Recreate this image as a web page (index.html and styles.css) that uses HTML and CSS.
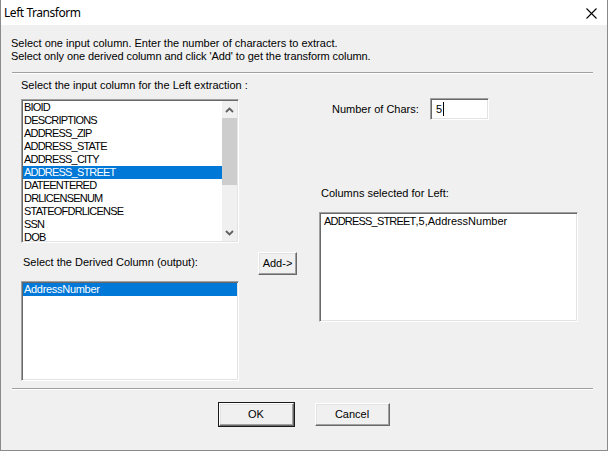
FILE: index.html
```html
<!DOCTYPE html>
<html>
<head>
<meta charset="utf-8">
<link rel="stylesheet" href="styles.css">
</head>
<body>
<div class="window">
  <div class="titlebar">
    <span class="title">Left Transform</span>
    <svg class="close" width="11" height="11" viewBox="0 0 11 11"><path d="M0.5 0.5 L10.5 10.5 M10.5 0.5 L0.5 10.5" stroke="#000" stroke-width="1.1" fill="none"/></svg>
  </div>
  <div class="content">
    <div class="intro">
      <div>Select one input column. Enter the number of characters to extract.</div>
      <div>Select only one derived column and click 'Add' to get the transform column.</div>
    </div>
    <div class="etched top-sep"></div>
    <div class="main">
      <div class="col-left">
        <div class="label l1">Select the input column for the Left extraction :</div>
        <div class="sunken list1">
          <div class="items">
            <div class="item">BIOID</div>
            <div class="item">DESCRIPTIONS</div>
            <div class="item">ADDRESS_ZIP</div>
            <div class="item">ADDRESS_STATE</div>
            <div class="item">ADDRESS_CITY</div>
            <div class="item sel">ADDRESS_STREET</div>
            <div class="item">DATEENTERED</div>
            <div class="item">DRLICENSENUM</div>
            <div class="item">STATEOFDRLICENSE</div>
            <div class="item">SSN</div>
            <div class="item">DOB</div>
          </div>
          <div class="vscroll">
            <div class="sbtn"><svg width="9" height="6" viewBox="0 0 9 6"><path d="M1 5 L4.5 1.5 L8 5" stroke="#606060" stroke-width="1.8" fill="none"/></svg></div>
            <div class="thumb"></div>
            <div class="track"></div>
            <div class="sbtn"><svg width="9" height="6" viewBox="0 0 9 6"><path d="M1 1 L4.5 4.5 L8 1" stroke="#606060" stroke-width="1.8" fill="none"/></svg></div>
          </div>
        </div>
        <div class="label l2">Select the Derived Column (output):</div>
        <div class="sunken list2">
          <div class="item sel">AddressNumber</div>
        </div>
      </div>
      <div class="col-mid">
        <button class="btn add">Add-&gt;</button>
      </div>
      <div class="col-right">
        <div class="chars-row">
          <span class="label chars-label">Number of Chars:</span>
          <div class="sunken edit"><span>5</span><span class="caret"></span></div>
        </div>
        <div class="label l3">Columns selected for Left:</div>
        <div class="sunken selected-box"><span class="caps">ADDRESS_STREET</span>,5,AddressNumber</div>
      </div>
    </div>
    <div class="etched bottom-sep"></div>
    <div class="buttons">
      <button class="btn default">OK</button>
      <button class="btn">Cancel</button>
    </div>
  </div>
</div>
</body>
</html>
```

FILE: styles.css
```css
html, body {
  margin: 0;
  padding: 0;
}
body {
  width: 608px;
  height: 451px;
  overflow: hidden;
  background: #f0f0f0;
  font-family: "Liberation Sans", Arial, sans-serif;
  font-size: 11px;
  color: #000;
}
.window {
  width: 608px;
  height: 451px;
  box-sizing: border-box;
  border-left: 1px solid #8a8a8a;
  border-right: 1px solid #8a8a8a;
  border-bottom: 1px solid #8a8a8a;
  background: #f0f0f0;
  display: flex;
  flex-direction: column;
}
.titlebar {
  height: 25px;
  flex: none;
  background: #fff;
  display: flex;
  align-items: center;
  padding-left: 3px;
  padding-right: 10px;
}
.title {
  font-family: "Segoe UI", "Noto Sans", sans-serif;
  font-size: 12px;
  letter-spacing: -0.45px;
  flex: 1;
  margin-top: -1px;
}
.close {
  display: block;
  margin-top: 1px;
}
.content {
  display: flex;
  flex-direction: column;
}
.intro {
  margin-top: 12px;
  padding-left: 10px;
  line-height: 13px;
}
.intro div + div {
  letter-spacing: -0.08px;
}
.etched {
  border-top: 1px solid #a0a0a0;
  border-bottom: 1px solid #fff;
  height: 0;
}
.top-sep {
  margin-top: 9px;
  margin-left: 11px;
  width: 581px;
}
.main {
  display: flex;
  align-items: flex-start;
}
.label {
  line-height: 13px;
  white-space: nowrap;
}
.col-left {
  margin-left: 20px;
  width: 218px;
  display: flex;
  flex-direction: column;
}
.l1 {
  margin-top: 5px;
}
.sunken {
  box-sizing: border-box;
  background: #fff;
  border-top: 1px solid #a0a0a0;
  border-left: 1px solid #a0a0a0;
  border-right: 1px solid #fff;
  border-bottom: 1px solid #fff;
  box-shadow: inset 1px 1px 0 #696969, inset -1px -1px 0 #e3e3e3;
  padding: 1px;
}
.list1 {
  margin-top: 7px;
  height: 144px;
  display: flex;
  overflow: hidden;
}
.items {
  flex: 1;
  overflow: hidden;
}
.item {
  height: 13px;
  line-height: 13px;
  padding-left: 1px;
  white-space: nowrap;
}
.list1 .item,
.caps {
  letter-spacing: -0.8px;
}
.item.sel {
  background: #0078d7;
  color: #fff;
}
.vscroll {
  width: 15px;
  flex: none;
  display: flex;
  flex-direction: column;
  background: #f0f0f0;
}
.sbtn {
  height: 17px;
  flex: none;
  display: flex;
  align-items: center;
  justify-content: center;
}
.sbtn svg {
  display: block;
}
.thumb {
  height: 67px;
  flex: none;
  background: #cdcdcd;
}
.track {
  flex: 1;
}
.l2 {
  margin-top: 13px;
  margin-left: 2px;
}
.list2 {
  margin-top: 12px;
  height: 100px;
}
.list2 .item {
  letter-spacing: -0.3px;
}
.col-mid {
  margin-left: 19px;
  width: 39px;
}
.btn {
  box-sizing: border-box;
  font-family: "Liberation Sans", Arial, sans-serif;
  font-size: 11px;
  color: #000;
  background: #f0f0f0;
  border-top: 1px solid #fff;
  border-left: 1px solid #fff;
  border-right: 1px solid #696969;
  border-bottom: 1px solid #696969;
  box-shadow: inset -1px -1px 0 #a0a0a0, inset 1px 1px 0 #e3e3e3;
  padding: 0;
  margin: 0;
  height: 23px;
  line-height: 19px;
}
.add {
  margin-top: 178px;
  width: 39px;
}
.col-right {
  margin-left: 22px;
  width: 259px;
  display: flex;
  flex-direction: column;
}
.chars-row {
  margin-top: 24px;
  display: flex;
  align-items: center;
}
.chars-label {
  margin-left: 13px;
  width: 98px;
}
.edit {
  width: 59px;
  height: 22px;
  display: flex;
  align-items: center;
  padding-left: 5px;
  line-height: 13px;
}
.caret {
  display: inline-block;
  width: 1px;
  height: 14px;
  background: #000;
  margin-left: 1px;
}
.l3 {
  margin-top: 67px;
  margin-left: 2px;
}
.selected-box {
  margin-top: 12px;
  height: 110px;
  padding: 2px 4px;
  line-height: 13px;
  white-space: nowrap;
}
.bottom-sep {
  margin-top: 7px;
  margin-left: 11px;
  width: 581px;
}
.buttons {
  margin-top: 13px;
  display: flex;
  justify-content: center;
  gap: 21px;
}
.buttons .btn {
  width: 75px;
}
.btn.default {
  outline: 1px solid #1a1a1a;
  outline-offset: 0;
}
```
